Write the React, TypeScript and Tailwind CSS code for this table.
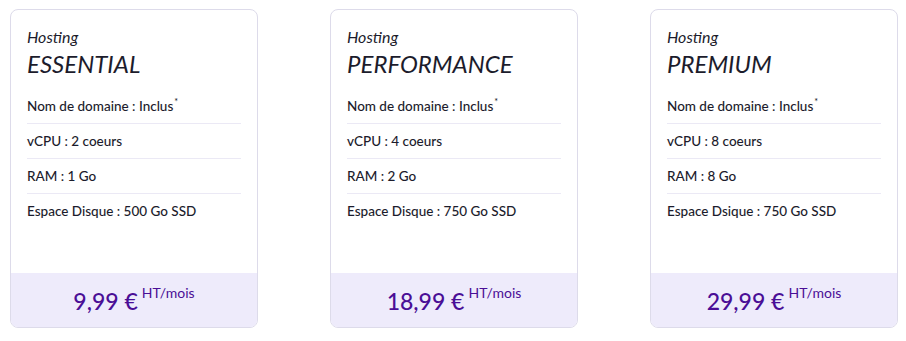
const plans = [
  {
    name: "ESSENTIAL",
    price: "9,99 €",
    features: ["vCPU : 2 coeurs", "RAM : 1 Go", "Espace Disque : 500 Go SSD"],
  },
  {
    name: "PERFORMANCE",
    price: "18,99 €",
    features: ["vCPU : 4 coeurs", "RAM : 2 Go", "Espace Disque : 750 Go SSD"],
  },
  {
    name: "PREMIUM",
    price: "29,99 €",
    features: ["vCPU : 8 coeurs", "RAM : 8 Go", "Espace Dsique : 750 Go SSD"],
  },
];

const PlanCard = ({ plan }: { plan: (typeof plans)[number] }) => {
  return (
    <div className="flex h-[319px] w-[248px] flex-col overflow-hidden rounded-lg border border-[#dddbea] bg-white">
      <div className="flex-1 px-4 pt-[17px]">
        {/* Title */}
        <div className="text-[16px] italic leading-[20px] text-[#1c1c2c]">Hosting</div>
        <div className="mt-[2px] text-[24px] italic leading-[30px] text-[#1c1c2c]">
          {plan.name}
        </div>

        {/* Features */}
        <ul className="mt-[10px] text-[13.5px] font-medium text-[#1c1c2c]">
          <li className="flex h-[35px] items-center border-b border-[#ebe9f5]">
            Nom de domaine : Inclus<sup className="ml-[1px] text-[9px]">*</sup>
          </li>
          {plan.features.map((f, i) => (
            <li
              key={i}
              className={`flex h-[35px] items-center ${
                i < plan.features.length - 1 ? "border-b border-[#ebe9f5]" : ""
              }`}
            >
              {f}
            </li>
          ))}
        </ul>
      </div>

      {/* Price */}
      <div className="flex h-[54px] items-center justify-center bg-[#eeebfb] pt-[2px] text-[#4a0e96]">
        <span className="text-[23px] font-medium leading-none">{plan.price}</span>
        <span className="ml-[4px] -translate-y-[8px] text-[14px] leading-none">HT/mois</span>
      </div>
    </div>
  );
};

export default function App() {
  return (
    <div
      className="h-[341px] w-[906px] bg-white pl-[10px] pt-[9px]"
      style={{ fontFamily: "Lato, 'Open Sans', sans-serif" }}
    >
      <div className="flex gap-[72px]">
        {plans.map((plan) => (
          <PlanCard key={plan.name} plan={plan} />
        ))}
      </div>
    </div>
  );
}
